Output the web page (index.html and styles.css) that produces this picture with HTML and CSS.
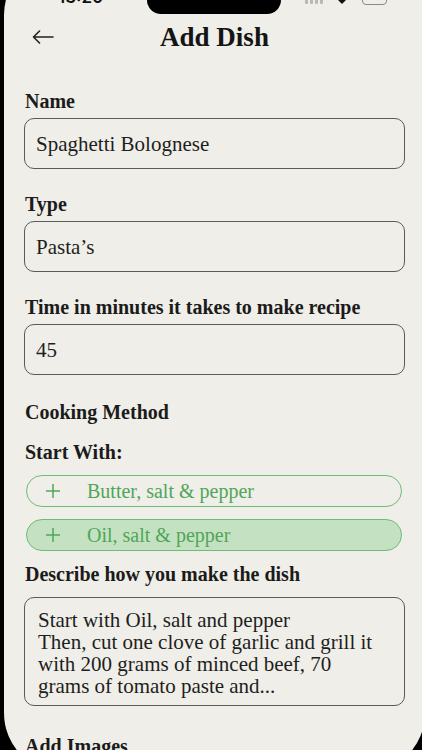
FILE: index.html
```html
<!DOCTYPE html>
<html lang="en">
<head>
    <meta charset="UTF-8">
    <meta name="viewport" content="width=device-width, initial-scale=1.0">
    <title>Add Dish</title>
    <link rel="stylesheet" href="styles.css">
</head>
<body>
    <div class="screen">
        <!-- Status bar -->
        <div class="status-bar">
            <div class="sb-left"><span class="sb-time">13:20</span></div>
            <div class="notch"></div>
            <div class="sb-right">
                <svg class="sb-icons" width="82" height="20" viewBox="0 0 82 20">
                    <rect x="0" y="13" width="3" height="6" rx="1" fill="#b8b8b8"/>
                    <rect x="5" y="10" width="3" height="9" rx="1" fill="#b8b8b8"/>
                    <rect x="10" y="7" width="3" height="12" rx="1" fill="#b8b8b8"/>
                    <rect x="15" y="4" width="3" height="15" rx="1" fill="#b8b8b8"/>
                    <path d="M37 19 L33 15 A5.6 5.6 0 0 1 41 15 Z" fill="#111"/>
                    <rect x="57.5" y="8.5" width="24" height="11" rx="3.5" fill="none" stroke="#8a8a8a"/>
                </svg>
            </div>
        </div>

        <!-- Header -->
        <div class="header">
            <div class="back">
                <svg width="22" height="14" viewBox="0 0 22 14">
                    <path d="M21 7 H1.5 M7.5 1 L1.5 7 L7.5 13" fill="none" stroke="#222" stroke-width="1.6" stroke-linecap="round" stroke-linejoin="round"/>
                </svg>
            </div>
            <h1 class="title">Add Dish</h1>
            <div></div>
        </div>

        <!-- Form -->
        <div class="form">
            <div class="label">Name</div>
            <div class="field">Spaghetti Bolognese</div>

            <div class="label gap">Type</div>
            <div class="field">Pasta’s</div>

            <div class="label gap">Time in minutes it takes to make recipe</div>
            <div class="field">45</div>

            <div class="label gap-lg">Cooking Method</div>
            <div class="label gap-sm">Start With:</div>

            <div class="chips">
                <div class="chip">
                    <svg width="16" height="16" viewBox="0 0 16 16"><path d="M8 1 V15 M1 8 H15" stroke="#4fa65a" stroke-width="1.5"/></svg>
                    <span>Butter, salt &amp; pepper</span>
                </div>
                <div class="chip chip-on">
                    <svg width="16" height="16" viewBox="0 0 16 16"><path d="M8 1 V15 M1 8 H15" stroke="#4fa65a" stroke-width="1.5"/></svg>
                    <span>Oil, salt &amp; pepper</span>
                </div>
            </div>

            <div class="label gap-chip">Describe how you make the dish</div>
            <div class="textarea">Start with Oil, salt and pepper
Then, cut one clove of garlic and grill it
with 200 grams of minced beef, 70
grams of tomato paste and...</div>

            <div class="label gap-end">Add Images</div>
        </div>
    </div>
</body>
</html>
```

FILE: styles.css
```css
html, body {
    margin: 0;
    height: 100%;
    overflow: hidden;
}
body {
    background-color: #000;
    font-family: "Liberation Serif", "Times New Roman", serif;
    color: #1b1b1b;
}
.screen {
    margin: -45px 0 0 4px;
    width: 421px;
    height: 818px;
    border-radius: 60px;
    background-color: #efeee8;
    overflow: hidden;
}

/* status bar */
.status-bar {
    display: flex;
    align-items: flex-end;
    height: 59px;
}
.sb-left {
    width: 143px;
    box-sizing: border-box;
    padding-left: 54px;
}
.sb-time {
    display: block;
    font-family: Inter, "Liberation Sans", sans-serif;
    font-weight: 600;
    font-size: 17px;
    line-height: 17px;
    margin-bottom: 8px;
    color: #111;
}
.notch {
    width: 134px;
    height: 59px;
    background-color: #000;
    border-radius: 0 0 14px 14px;
}
.sb-right {
    flex: 1;
    padding-left: 24px;
}
.sb-icons {
    display: block;
    margin-bottom: 9px;
}

/* header */
.header {
    display: grid;
    grid-template-columns: 1fr auto 1fr;
    align-items: center;
    padding: 7px 20px 0 20px;
}
.back {
    padding-left: 8px;
}
.back svg {
    display: block;
}
.title {
    margin: 0;
    font-size: 27px;
    line-height: 32px;
    font-weight: bold;
    color: #141414;
}

/* form */
.form {
    padding: 36px 20px 0 20px;
}
.label {
    font-size: 20px;
    line-height: 24px;
    font-weight: bold;
    margin-bottom: 5px;
    padding-left: 1px;
}
.gap { margin-top: 23px; }
.gap-lg { margin-top: 25px; }
.gap-sm { margin-top: 16px; margin-bottom: 11px; }
.gap-chip { margin-top: 11px; margin-bottom: 11px; }
.gap-end { margin-top: 28px; }

.field {
    height: 51px;
    box-sizing: border-box;
    border: 1.5px solid #5a5a5a;
    border-radius: 10px;
    padding: 0 11px;
    display: flex;
    align-items: center;
    font-size: 21px;
    line-height: 24px;
    color: #1e1e1e;
}

.chips {
    display: flex;
    flex-direction: column;
    gap: 12px;
    margin: 0 3px 0 2px;
}
.chip {
    height: 32px;
    box-sizing: border-box;
    border: 1.5px solid #6dbd76;
    border-radius: 16px;
    display: flex;
    align-items: center;
    gap: 26px;
    padding-left: 18px;
    font-size: 20px;
    color: #4fa65a;
}
.chip svg {
    display: block;
}
.chip-on {
    background-color: #c4e2c1;
}

.textarea {
    height: 109px;
    box-sizing: border-box;
    border: 1.5px solid #5a5a5a;
    border-radius: 10px;
    padding: 11px 12px 0 13px;
    font-size: 21px;
    line-height: 22px;
    white-space: pre-line;
    color: #1e1e1e;
}
```
